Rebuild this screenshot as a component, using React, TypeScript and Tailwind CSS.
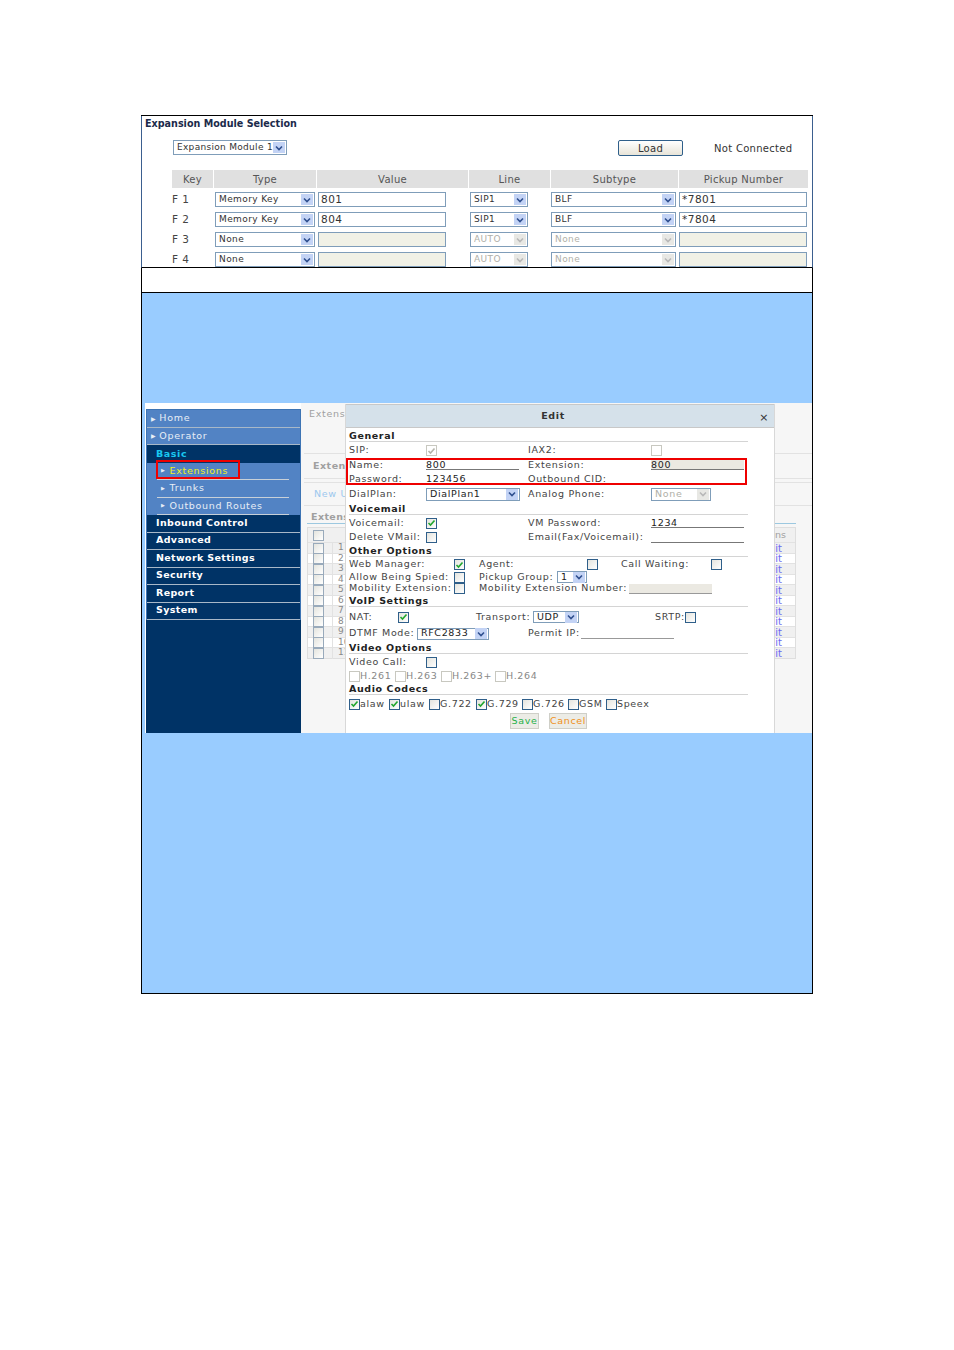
import type { ReactNode } from "react";

const keyRows = [
  { key: "F 1", type: "Memory Key", value: "801", line: "SIP1", subtype: "BLF", pickup: "*7801", off: false },
  { key: "F 2", type: "Memory Key", value: "804", line: "SIP1", subtype: "BLF", pickup: "*7804", off: false },
  { key: "F 3", type: "None", value: "", line: "AUTO", subtype: "None", pickup: "", off: true },
  { key: "F 4", type: "None", value: "", line: "AUTO", subtype: "None", pickup: "", off: true },
];

const menuTop = ["Home", "Operator"];
const menuSub = ["Extensions", "Trunks", "Outbound Routes"];
const menuBottom = ["Inbound Control", "Advanced", "Network Settings", "Security", "Report", "System"];
const tableRows = ["1", "2", "3", "4", "5", "6", "7", "8", "9", "10", "11"];

function Chevron({ off }: { off?: boolean }) {
  return (
    <span className={`flex h-[11px] w-[12px] shrink-0 items-center justify-center ${off ? "bg-[#e8e8e4]" : "bg-[#c3d3f5]"}`}>
      <svg width="8" height="6" viewBox="0 0 8 6">
        <path d="M1 1.5 L4 4.5 L7 1.5" fill="none" stroke={off ? "#b8b8b8" : "#2f4f8f"} strokeWidth="1.6" />
      </svg>
    </span>
  );
}

function Select({ text, off, className }: { text: string; off?: boolean; className: string }) {
  return (
    <div className={`flex items-center justify-between border border-[#7f9db9] bg-white pl-[3px] pr-px ${off ? "text-[#b0b0a8]" : ""} ${className}`}>
      <span className="truncate">{text}</span>
      <Chevron off={off} />
    </div>
  );
}

function Box({ text, off, className }: { text: string; off: boolean; className: string }) {
  return (
    <div className={`flex h-[15px] items-center border border-[#7f9db9] pl-[2px] text-[10.5px] tracking-[0.5px] ${off ? "bg-[#f1f1e6]" : "bg-white"} ${className}`}>
      {text}
    </div>
  );
}

function Check({ on, soft, className = "" }: { on?: boolean; soft?: boolean; className?: string }) {
  return (
    <span className={`flex h-[11px] w-[11px] shrink-0 items-center justify-center border ${soft ? "border-[#c8c8c0] bg-white" : "border-[#2f5f8a] bg-gradient-to-br from-[#e4e4de] to-white"} ${className}`}>
      {on && (
        <svg width="9" height="8" viewBox="0 0 9 8">
          <path d="M1.5 4 L3.5 6 L7.5 1.5" fill="none" stroke={soft ? "#b4b4ac" : "#22a62e"} strokeWidth="1.6" />
        </svg>
      )}
    </span>
  );
}

function Line({ text, className }: { text: string; className: string }) {
  return <span className={`flex h-[10px] items-center border-b border-[#777] leading-none text-[#222] ${className}`}>{text}</span>;
}

function SectionHead({ text, className }: { text: string; className: string }) {
  return (
    <div className={`flex w-[399px] items-center border-b border-[#d4d4d4] font-bold tracking-[0.6px] text-[#222] ${className}`}>{text}</div>
  );
}

function MenuItem({ text, dark }: { text: string; dark?: boolean }) {
  return (
    <div
      className={`flex h-[17.5px] items-center border-b border-[#a8b8c8] ${
        dark ? "bg-[#003366] pb-px pl-[9px] font-bold tracking-[0.35px] text-white" : "bg-[#5283c4] pl-[4px] tracking-[0.7px] text-[#e8eef6]"
      }`}
    >
      {!dark && <span className="mr-[3px] text-[6px]">▶</span>}
      {text}
    </div>
  );
}

function Codec({ text, on, soft, className }: { text: string; on?: boolean; soft?: boolean; className: string }) {
  return (
    <span className={`flex items-center ${className}`}>
      <Check on={on} soft={soft} />
      <span className={soft ? "text-[#888]" : ""}>{text}</span>
    </span>
  );
}

function Row({ className, children }: { className: string; children: ReactNode }) {
  return <div className={`flex items-center ${className}`}>{children}</div>;
}

export default function App() {
  return (
    <div className="h-[1350px] w-[954px] bg-white pl-[141px] pt-[115px] font-['DejaVu_Sans',sans-serif] text-[#333]">
      <div className="w-[672px] border-y border-black">
        {/* expansion module panel */}
        <section className="h-[152px] overflow-hidden border-x border-b border-x-[#3b5f8f] border-b-black">
          <h2 className="pl-[3px] pt-[1px] text-[9.6px] font-bold leading-[13px] text-[#1b2a4a]">Expansion Module Selection</h2>
          <div className="mt-[10px] flex h-[15px] items-center pl-[31px] text-[9px] tracking-[0.3px]">
            <Select text="Expansion Module 1" className="h-[15px] w-[114px]" />
            <button className="ml-[331px] h-[16px] w-[65px] rounded-[2px] border border-[#2f5f8a] bg-gradient-to-b from-white to-[#e8e4d8] text-[10px] tracking-[0.3px]">
              Load
            </button>
            <span className="ml-[31px] pt-px text-[10px] tracking-[0.3px]">Not Connected</span>
          </div>
          <div className="ml-[30px] mt-[15px] grid grid-cols-[41px_102px_151px_81px_127px_130px] gap-x-px text-[10px]">
            {["Key", "Type", "Value", "Line", "Subtype", "Pickup Number"].map((h, i) => (
              <div key={h} className={`flex h-[18px] items-center justify-center bg-[#e0e0e0] tracking-[0.3px] text-[#555] ${i === 5 ? "w-[129px]" : ""}`}>
                {h}
              </div>
            ))}
          </div>
          <div className="ml-[30px] mt-[4px] grid grid-cols-[41px_102px_151px_81px_127px_130px] gap-x-px gap-y-[5px] text-[9px] tracking-[0.4px]">
            {keyRows.map((r) => (
              <div key={r.key} className="contents">
                <div className="flex h-[15px] items-center text-[10.5px] text-[#444]">{r.key}</div>
                <div className="pl-px"><Select text={r.type} className="h-[15px] w-[100px]" /></div>
                <div className="pl-px"><Box text={r.value} off={r.off} className="w-[128px]" /></div>
                <div className="pl-px"><Select text={r.line} off={r.off} className="h-[15px] w-[58px]" /></div>
                <div><Select text={r.subtype} off={r.off} className="h-[15px] w-[125px]" /></div>
                <div><Box text={r.pickup} off={r.off} className="w-[128px]" /></div>
              </div>
            ))}
          </div>
        </section>

        <div className="h-[25px] border-x border-b border-black bg-white" />

        {/* blue page with the PBX screenshot */}
        <section className="border-x border-black bg-[#99ccff] pt-[110px] pb-[260px]">
          <div className="ml-[3px] flex h-[330px] w-[667px] bg-white">
            <aside className="ml-px mt-[6px] w-[155px] bg-[#003366] text-[9.5px]">
              <div className="border border-[#3d74b4] border-b-0">
                {menuTop.map((m) => <MenuItem key={m} text={m} />)}
                <div className="flex h-[17.5px] items-center bg-[#003366] pl-[9px] font-bold tracking-[0.6px] text-[#19c8f0]">Basic</div>
                <div className="bg-[#5283c4] pl-[10px] pr-[11px]">
                  {menuSub.map((m, i) => (
                    <div key={m} className={`relative flex h-[17.5px] items-center border-b border-[#c8d0d8] pl-[4px] tracking-[0.7px] ${i === 0 ? "text-[#f0f020]" : "text-[#e8eef6]"}`}>
                      <span className="mr-[4px] text-[5px] text-[#e8eef6]">▶</span>
                      {m}
                      {i === 0 && <span className="absolute -left-px -top-[3px] bottom-0 w-[84px] border-2 border-[#ee0000]" />}
                    </div>
                  ))}
                </div>
                {menuBottom.map((m) => <MenuItem key={m} text={m} dark />)}
              </div>
            </aside>

            {/* faded page behind the dialog */}
            <main className="relative flex-1 bg-[#f6f6f6] pl-[3px] text-[9.5px] text-[#a0a0a0]">
              <div className="pl-[5px] pt-[4px] tracking-[0.7px]">Extensions</div>
              <div className="mt-[32px] flex h-[26px] items-center border-y border-[#e2e2e2] pl-[9px] font-bold tracking-[0.5px]">Extensions</div>
              <div className="mt-[3px] flex h-[24px] items-center border-y border-[#e2e2e2] pl-[10px]">
                <span className="tracking-[0.7px] text-[#9cc8ee]">New User</span>
              </div>
              <div className="ml-[3px] mr-[16px] mt-[4px] flex h-[14px] items-center border-b border-[#9cc8e0] pl-[4px] font-bold tracking-[0.4px]">Extensions</div>
              <div className="ml-[3px] mr-[16px] mt-[3px] border border-[#dedede] bg-[#f0f0f0]">
                <div className="flex h-[14px] items-center justify-between pl-[5px] pr-[9px] text-[9.5px]">
                  <Check className="border-[#9ab]" />
                  <span>ns</span>
                </div>
                {tableRows.map((n, i) => (
                  <div key={n} className={`flex h-[10.5px] items-center justify-between border-t border-[#e2e2e2] pl-[5px] pr-[13px] ${i % 2 ? "bg-white" : "bg-[#f0f0f0]"}`}>
                    <span className="flex items-center">
                      <span className="flex w-[20px] border-r border-[#e2e2e2]">
                        <Check className="border-[#9ab]" />
                      </span>
                      <span className="ml-[5px] text-[9px] text-[#888]">{n}</span>
                    </span>
                    <span className="text-[10px] text-[#6a6af0]">it</span>
                  </div>
                ))}
              </div>

              {/* edit dialog */}
              <div className="absolute bottom-0 left-[44px] top-px w-[430px] border-x border-[#d8d8d8] bg-white text-[9.5px] tracking-[0.65px] text-[#444]">
                <div className="relative flex h-[24px] items-center justify-center border-y border-[#c8c8c8] bg-[#d5e1ea] pr-[14px] pt-[1px] font-bold text-[#333]">
                  Edit
                  <span className="absolute right-[5px] top-[5px] text-[11px] font-normal">×</span>
                </div>
                <div className="pl-[3px]">
                  <SectionHead text="General" className="h-[14px] pt-[4px]" />
                  <Row className="h-[16px] pt-px">
                    <span className="w-[77px]">SIP:</span>
                    <Check on soft />
                    <span className="ml-[91px] w-[123px]">IAX2:</span>
                    <Check soft />
                  </Row>
                  <div className="relative">
                    <Row className="h-[14px]">
                      <span className="w-[77px]">Name:</span>
                      <Line text="800" className="w-[93px]" />
                      <span className="ml-[9px] w-[123px]">Extension:</span>
                      <Line text="800" className="w-[93px] bg-[#ebe9e2]" />
                    </Row>
                    <Row className="h-[14px]">
                      <span className="w-[77px]">Password:</span>
                      <span className="w-[102px] text-[#222]">123456</span>
                      <span>Outbound CID:</span>
                    </Row>
                    <span className="absolute -left-[3px] top-0 h-[27px] w-[401px] border-2 border-[#ee0000]" />
                  </div>
                  <Row className="h-[16px]">
                    <span className="w-[77px]">DialPlan:</span>
                    <Select text="DialPlan1" className="h-[13px] w-[94px] text-[#222]" />
                    <span className="ml-[8px] w-[123px]">Analog Phone:</span>
                    <Select text="None" off className="h-[13px] w-[60px]" />
                  </Row>
                  <SectionHead text="Voicemail" className="h-[13px] pt-[2px]" />
                  <Row className="h-[16px]">
                    <span className="w-[77px]">Voicemail:</span>
                    <Check on />
                    <span className="ml-[91px] w-[123px]">VM Password:</span>
                    <Line text="1234" className="w-[93px]" />
                  </Row>
                  <Row className="h-[13px]">
                    <span className="w-[77px]">Delete VMail:</span>
                    <Check />
                    <span className="ml-[91px] w-[123px]">Email(Fax/Voicemail):</span>
                    <Line text="" className="w-[93px]" />
                  </Row>
                  <SectionHead text="Other Options" className="h-[13px] pt-[2px]" />
                  <Row className="h-[14px] pt-px">
                    <span className="w-[105px]">Web Manager:</span>
                    <Check on />
                    <span className="ml-[14px] w-[108px]">Agent:</span>
                    <Check />
                    <span className="ml-[23px] w-[90px]">Call Waiting:</span>
                    <Check />
                  </Row>
                  <Row className="h-[12px]">
                    <span className="w-[105px]">Allow Being Spied:</span>
                    <Check />
                    <span className="ml-[14px] w-[78px]">Pickup Group:</span>
                    <Select text="1" className="h-[12px] w-[30px] text-[#222]" />
                  </Row>
                  <Row className="h-[11px]">
                    <span className="w-[105px]">Mobility Extension:</span>
                    <Check />
                    <span className="ml-[14px] w-[150px]">Mobility Extension Number:</span>
                    <span className="h-[10px] w-[83px] border-b border-[#999] bg-[#ebe9e2]" />
                  </Row>
                  <SectionHead text="VoIP Settings" className="h-[13px] pt-[3px]" />
                  <Row className="h-[20px]">
                    <span className="w-[49px]">NAT:</span>
                    <Check on />
                    <span className="ml-[67px] w-[57px]">Transport:</span>
                    <Select text="UDP" className="h-[12px] w-[46px] text-[#222]" />
                    <span className="ml-[76px] w-[30px]">SRTP:</span>
                    <Check />
                  </Row>
                  <Row className="h-[13px]">
                    <span className="w-[68px]">DTMF Mode:</span>
                    <Select text="RFC2833" className="h-[12px] w-[72px] text-[#222]" />
                    <span className="ml-[39px] w-[53px]">Permit IP:</span>
                    <span className="h-[10px] w-[93px] border-b border-[#999]" />
                  </Row>
                  <SectionHead text="Video Options" className="h-[14px] pt-[3px]" />
                  <Row className="h-[16px]">
                    <span className="w-[77px]">Video Call:</span>
                    <Check />
                  </Row>
                  <Row className="h-[12px]">
                    <Codec text="H.261" soft className="w-[46px]" />
                    <Codec text="H.263" soft className="w-[46px]" />
                    <Codec text="H.263+" soft className="w-[54px]" />
                    <Codec text="H.264" soft className="w-[46px]" />
                  </Row>
                  <SectionHead text="Audio Codecs" className="h-[13px] pt-[2px]" />
                  <Row className="h-[18px]">
                    <Codec text="alaw" on className="w-[40px]" />
                    <Codec text="ulaw" on className="w-[40px]" />
                    <Codec text="G.722" className="w-[47px]" />
                    <Codec text="G.729" on className="w-[46px]" />
                    <Codec text="G.726" className="w-[46px]" />
                    <Codec text="GSM" className="w-[38px]" />
                    <Codec text="Speex" className="w-[50px]" />
                  </Row>
                  <Row className="h-[16px] pl-[161px]">
                    <button className="flex h-[16px] w-[29px] items-center justify-center border border-[#cfcfc8] bg-[#ecece6] text-[#28b048]">Save</button>
                    <button className="ml-[10px] flex h-[16px] w-[38px] items-center justify-center border border-[#cfcfc8] bg-[#ecece6] text-[#f09020]">Cancel</button>
                  </Row>
                </div>
              </div>
            </main>
          </div>
        </section>
      </div>
    </div>
  );
}
